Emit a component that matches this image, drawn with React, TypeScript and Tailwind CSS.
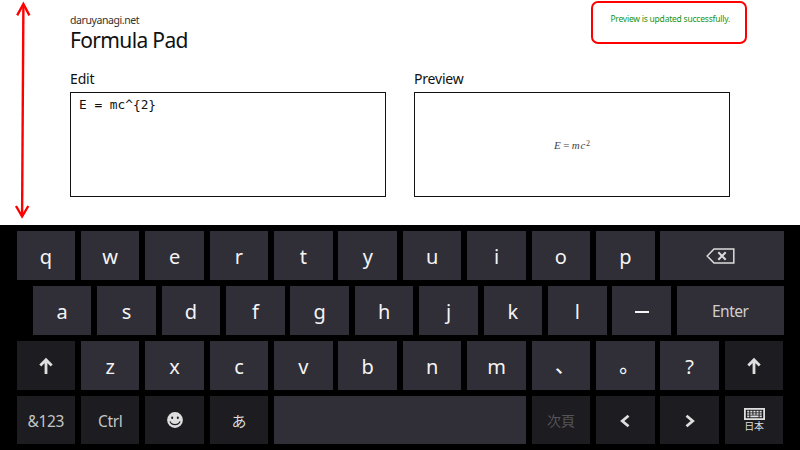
import React from "react";

type KeyProps = {
  children?: React.ReactNode;
  dark?: boolean;
  className?: string;
};

function Key({ children, dark = false, className = "w-[58.6px] text-[20px] text-[#f4f4f4]" }: KeyProps) {
  return (
    <div
      className={`flex h-[48.8px] shrink-0 items-center justify-center leading-none ${
        dark ? "bg-[#1d1c20]" : "bg-[#302e37]"
      } ${className}`}
    >
      {children}
    </div>
  );
}

function Letters({ text }: { text: string }) {
  return (
    <>
      {text.split("").map((c) => (
        <Key key={c}>
          <span className="pt-[4px]">{c}</span>
        </Key>
      ))}
    </>
  );
}

function Punctuation({ text }: { text: string }) {
  return (
    <>
      {text.split("").map((c) => (
        <Key key={c}>
          <span className="pb-[1px] pl-[8px] font-['Noto_Sans_CJK_JP',sans-serif] text-[20px] font-medium">{c}</span>
        </Key>
      ))}
    </>
  );
}

function ShiftIcon() {
  return (
    <svg width="14" height="18" viewBox="0 0 14 18" fill="none" stroke="#dedede" strokeWidth="2.8" className="mb-[-1px]">
      <path d="M7 17V3M1.3 8.6L7 2.8L12.7 8.6" />
    </svg>
  );
}

function Chevron({ right = false }: { right?: boolean }) {
  return (
    <svg width="12" height="14" viewBox="0 0 12 14" fill="none" stroke="#dedede" strokeWidth="2.8" className="mt-[1px]">
      {right ? <path d="M2.5 1.7L8.7 7L2.5 12.3" /> : <path d="M9.5 1.7L3.3 7L9.5 12.3" />}
    </svg>
  );
}

function BackspaceIcon() {
  return (
    <svg width="29" height="16" viewBox="0 0 29 16" fill="none" stroke="#dcdcdc" strokeWidth="1.5" className="mr-[3px] mt-[2px]">
      <path d="M1.2 8L8 1H27.8V15H8Z" />
      <path d="M12.3 4.3L19.7 11.7M19.7 4.3L12.3 11.7" strokeWidth="2" />
    </svg>
  );
}

function SmileIcon() {
  return (
    <svg width="16" height="16" viewBox="0 0 16 16" className="mb-[1px] ml-[1px]">
      <circle cx="8" cy="8" r="7.9" fill="#dedede" />
      <ellipse cx="5.2" cy="5.8" rx="1" ry="1.2" fill="#1d1c20" />
      <ellipse cx="10.8" cy="5.8" rx="1" ry="1.2" fill="#1d1c20" />
      <path d="M3 9.3C4.3 13.6 11.7 13.6 13 9.3" fill="none" stroke="#1d1c20" strokeWidth="1.2" />
    </svg>
  );
}

function KeyboardIcon() {
  return (
    <svg width="21" height="12" viewBox="0 0 21 12" fill="none" stroke="#dedede">
      <rect x="0.9" y="0.9" width="19.2" height="10.2" strokeWidth="1.8" />
      <path d="M3.2 3.7H17.8M3.2 6H17.8" strokeWidth="1.7" strokeDasharray="2.1 1" />
      <path d="M3.2 8.3H5.3M6.3 8.3H14.6M15.6 8.3H17.8" strokeWidth="1.7" />
    </svg>
  );
}

function DoubleArrow() {
  return (
    <svg className="absolute left-0 top-0" width="45" height="224" viewBox="0 0 45 224" fill="none" stroke="#ff0000" strokeWidth="2.4">
      <path d="M23.4 4L22.1 216" />
      <path d="M17.2 15.4L23.4 4L29.4 15.4M16 206L22.1 216.5L28.3 206" />
    </svg>
  );
}

export default function App() {
  return (
    <div className="relative flex h-[450px] w-[800px] flex-col overflow-hidden bg-white font-['Noto_Sans','Noto_Sans_CJK_JP',sans-serif] text-[#111]">
      <main className="h-[225px] shrink-0 px-[70px]">
        <header className="flex h-[69px] justify-between pt-[13px]">
          <div>
            <div className="text-[10.5px] leading-[14px] tracking-[-0.42px] text-[#333]">daruyanagi.net</div>
            <h1 className="text-[21px] leading-[26px] tracking-[-0.65px]">Formula Pad</h1>
          </div>
          <p className="pt-[1px] text-[8.5px] leading-[10px] tracking-[-0.22px] text-[#169416]">Preview is updated successfully.</p>
        </header>
        <div className="flex gap-[28px]">
          <section>
            <h2 className="h-[23px] text-[14px] leading-[20px] tracking-[-0.15px]">Edit</h2>
            <div className="h-[105px] w-[316px] border border-[#111] px-[8px] pt-[3px] font-['DejaVu_Sans_Mono',monospace] text-[12.8px] leading-[17px]">
              E = mc^&#123;2&#125;
            </div>
          </section>
          <section>
            <h2 className="h-[23px] text-[14px] leading-[20px] tracking-[-0.2px]">Preview</h2>
            <div className="flex h-[105px] w-[316px] items-center justify-center border border-[#111] pt-[1px] font-['Liberation_Serif',serif] text-[11px] leading-none text-[#444]">
              <i>E</i>
              <span className="mx-[2.5px]">=</span>
              <i className="tracking-[0.7px]">mc</i>
              <span className="mb-[3px] text-[8px]">2</span>
            </div>
          </section>
        </div>
      </main>

      <div className="flex h-[225px] flex-col gap-[6.1px] bg-black pl-[16.5px] pt-[6px]">
        <div className="flex gap-[5.8px]">
          <Letters text="qwertyuiop" />
          <Key className="w-[123.2px]">
            <BackspaceIcon />
          </Key>
        </div>
        <div className="flex gap-[5.8px] pl-[16.4px]">
          <Letters text="asdfghjkl" />
          <Key>
            <span className="mt-[3px] h-[2px] w-[14px] bg-[#f4f4f4]" />
          </Key>
          <Key className="w-[106.8px] pt-[3px] text-[15.5px] tracking-[-0.5px] text-[#cfcfcf]">Enter</Key>
        </div>
        <div className="flex gap-[5.8px]">
          <Key dark>
            <ShiftIcon />
          </Key>
          <Letters text="zxcvbnm" />
          <Punctuation text="、。" />
          <Letters text="?" />
          <Key dark>
            <ShiftIcon />
          </Key>
        </div>
        <div className="flex gap-[5.8px]">
          <Key dark className="w-[58.6px] pt-[3px] text-[15.5px] tracking-[-0.4px] text-[#c4c4c4]">&amp;123</Key>
          <Key dark className="w-[58.6px] pt-[3px] text-[15.5px] tracking-[-0.4px] text-[#c4c4c4]">Ctrl</Key>
          <Key dark>
            <SmileIcon />
          </Key>
          <Key dark className="w-[58.6px] font-['Noto_Sans_CJK_JP',sans-serif] text-[15px] text-[#dedede]">あ</Key>
          <Key className="w-[251.8px]" />
          <Key dark className="w-[58.6px] font-['Noto_Sans_CJK_JP',sans-serif] text-[14px] text-[#55545a]">次頁</Key>
          <Key dark>
            <Chevron />
          </Key>
          <Key dark>
            <Chevron right />
          </Key>
          <Key dark className="w-[58.6px] flex-col gap-[1px] pb-[1px] text-[10px] text-[#dedede]">
            <KeyboardIcon />
            <span>日本</span>
          </Key>
        </div>
      </div>

      <DoubleArrow />
      <div className="absolute left-[591px] top-[1px] h-[43px] w-[156px] rounded-[7px] border-2 border-[#ff0000]" />
    </div>
  );
}
